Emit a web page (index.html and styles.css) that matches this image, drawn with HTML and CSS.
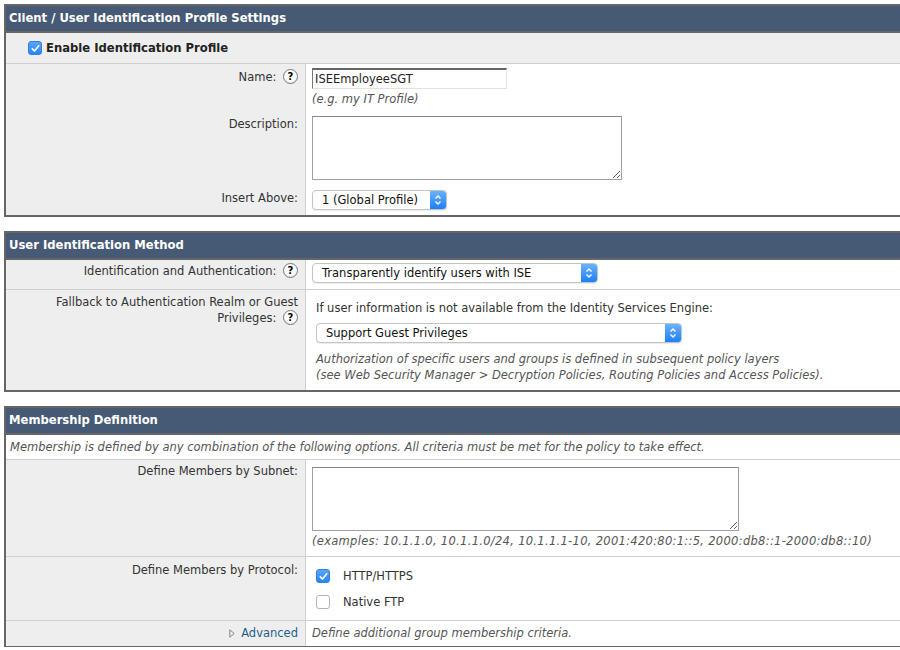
FILE: index.html
```html
<!DOCTYPE html>
<html lang="en">
<head>
    <meta charset="UTF-8">
    <title>Client / User Identification Profile Settings</title>
    <link rel="stylesheet" href="styles.css">
</head>
<body>
<div class="page">
    <div class="section">
        <div class="section-head">Client / User Identification Profile Settings</div>
        <div class="row-full enable">
            <span class="check on"><svg width="13" height="13" viewBox="0 0 13 13"><path d="M3.3 6.8 L5.5 9 L9.8 3.8" fill="none" stroke="#fff" stroke-width="1.7" stroke-linecap="round" stroke-linejoin="round"/></svg></span>
            <span class="enable-text">Enable Identification Profile</span>
        </div>
        <div class="row row-name">
            <div class="label">Name: <span class="help">?</span></div>
            <div class="field">
                <input class="text" type="text" value="ISEEmployeeSGT">
                <div class="hint">(e.g. my IT Profile)</div>
            </div>
        </div>
        <div class="row row-desc">
            <div class="label">Description:</div>
            <div class="field"><textarea class="area"></textarea></div>
        </div>
        <div class="row row-insert last">
            <div class="label">Insert Above:</div>
            <div class="field">
                <span class="select w-insert"><span class="select-text">1 (Global Profile)</span><span class="select-btn"><svg width="16" height="18" viewBox="0 0 16 18"><path d="M5.5 7.5 L8 5 L10.5 7.5 M5.5 10.5 L8 13 L10.5 10.5" fill="none" stroke="#fff" stroke-width="1.4"/></svg></span></span>
            </div>
        </div>
    </div>

    <div class="section">
        <div class="section-head">User Identification Method</div>
        <div class="row row-ident">
            <div class="label">Identification and Authentication: <span class="help">?</span></div>
            <div class="field">
                <span class="select w-ident"><span class="select-text">Transparently identify users with ISE</span><span class="select-btn"><svg width="16" height="18" viewBox="0 0 16 18"><path d="M5.5 7.5 L8 5 L10.5 7.5 M5.5 10.5 L8 13 L10.5 10.5" fill="none" stroke="#fff" stroke-width="1.4"/></svg></span></span>
            </div>
        </div>
        <div class="row row-fallback last">
            <div class="label">Fallback to Authentication Realm or Guest<br>Privileges: <span class="help">?</span></div>
            <div class="field wide">
                <div>If user information is not available from the Identity Services Engine:</div>
                <span class="select w-fallback"><span class="select-text">Support Guest Privileges</span><span class="select-btn"><svg width="16" height="18" viewBox="0 0 16 18"><path d="M5.5 7.5 L8 5 L10.5 7.5 M5.5 10.5 L8 13 L10.5 10.5" fill="none" stroke="#fff" stroke-width="1.4"/></svg></span></span>
                <div class="note">Authorization of specific users and groups is defined in subsequent policy layers<br>(see Web Security Manager &gt; Decryption Policies, Routing Policies and Access Policies).</div>
            </div>
        </div>
    </div>

    <div class="section">
        <div class="section-head">Membership Definition</div>
        <div class="row-full intro">Membership is defined by any combination of the following options. All criteria must be met for the policy to take effect.</div>
        <div class="row row-subnet">
            <div class="label">Define Members by Subnet:</div>
            <div class="field">
                <textarea class="area area-subnet"></textarea>
                <div class="hint examples">(examples: 10.1.1.0, 10.1.1.0/24, 10.1.1.1-10, 2001:420:80:1::5, 2000:db8::1-2000:db8::10)</div>
            </div>
        </div>
        <div class="row row-protocol">
            <div class="label">Define Members by Protocol:</div>
            <div class="field wide">
                <div class="option">
                    <span class="check on"><svg width="13" height="13" viewBox="0 0 13 13"><path d="M3.3 6.8 L5.5 9 L9.8 3.8" fill="none" stroke="#fff" stroke-width="1.7" stroke-linecap="round" stroke-linejoin="round"/></svg></span>
                    <span>HTTP/HTTPS</span>
                </div>
                <div class="option">
                    <span class="check"></span>
                    <span>Native FTP</span>
                </div>
            </div>
        </div>
        <div class="row row-advanced last">
            <div class="label"><svg class="arrow" width="6" height="9" viewBox="0 0 6 9"><path d="M0.8 0.8 L5.2 4.5 L0.8 8.2 Z" fill="none" stroke="#888" stroke-width="1"/></svg><a href="#" class="link">Advanced</a></div>
            <div class="field"><span class="hint">Define additional group membership criteria.</span></div>
        </div>
    </div>
</div>
</body>
</html>
```

FILE: styles.css
```css
body {
    margin: 0;
    padding: 0;
    background: #fff;
    font-family: "DejaVu Sans", Verdana, sans-serif;
    font-size: 11.5px;
    line-height: 16px;
    color: #333;
}
.page {
    width: 900px;
    height: 650px;
    overflow: hidden;
    padding: 4px 0 0 4px;
    box-sizing: border-box;
}
.section {
    width: 910px;
    border: 2px solid #666;
    margin-bottom: 14px;
}
.section-head {
    height: 25px;
    line-height: 25px;
    padding-left: 3px;
    background: #465a75;
    border-bottom: 2px solid #666;
    color: #fff;
    font-weight: bold;
    font-size: 11.6px;
}
.row {
    display: grid;
    grid-template-columns: 300px 1fr;
    border-bottom: 1px solid #cfcfcf;
}
.row.last { border-bottom: none; }
.row-full { border-bottom: 1px solid #cfcfcf; }
.label {
    background: #eee;
    border-right: 1px solid #cfcfcf;
    text-align: right;
    padding: 5px 7px 0 8px;
}
.field {
    padding: 5px 6px;
    background: #fff;
}
.field.wide { padding-left: 10px; }

/* Section 1 */
.enable {
    height: 30px;
    background: #eee;
    display: flex;
    align-items: center;
    padding-left: 22px;
}
.enable-text {
    font-weight: bold;
    color: #222;
    margin-left: 4px;
    font-size: 11.6px;
}
.row-name { height: 46px; }
.row-name .field { padding-top: 4px; }
.row-name .hint { margin-top: 2px; }
.row-desc { height: 73px; }
.row-insert { height: 30px; }
.row-ident { height: 29px; }
.row-ident .label { padding-top: 3px; }
.row-ident .field { padding-top: 3px; }
.row-fallback { height: 100px; }
.row-fallback .label { padding-top: 4px; }
.row-fallback .field { padding-top: 10px; }
.row-fallback .select { margin-top: 7px; }
.note {
    margin-top: 8px;
    font-style: italic;
    color: #555;
}

/* Section 3 */
.intro {
    height: 24px;
    line-height: 24px;
    padding-left: 4px;
    font-style: italic;
    color: #555;
}
.row-subnet { height: 96px; }
.row-subnet .label { padding-top: 3px; }
.row-subnet .field { padding-top: 7px; }
.row-subnet .hint { margin-top: 2px; }
.examples { letter-spacing: 0.3px; }
.row-protocol { height: 63px; }
.row-protocol .field { padding-top: 6px; }
.row-advanced { height: 24px; }
.row-advanced .label { padding-top: 4px; }
.row-advanced .field { padding-top: 4px; }

.option {
    display: flex;
    align-items: center;
    height: 26px;
}
.option .check { margin-right: 13px; }

.hint {
    font-style: italic;
    color: #555;
}
.help {
    display: inline-block;
    width: 13px;
    height: 13px;
    line-height: 13px;
    border: 1px solid #777;
    border-radius: 50%;
    background: radial-gradient(circle at 50% 40%, #fff 55%, #d8d8d8);
    color: #000;
    font-size: 10px;
    font-weight: bold;
    text-align: center;
    vertical-align: 1px;
    margin-left: 3px;
}
.check {
    display: inline-block;
    width: 12px;
    height: 12px;
    border: 1px solid #b5b5b5;
    border-radius: 3px;
    background: #fff;
    box-sizing: content-box;
    flex: none;
}
.check svg { display: block; margin: -0.5px; }
.check.on {
    border-color: #2f7fe6;
    background: linear-gradient(#58a6fb, #2a84f5);
}
.text {
    display: block;
    width: 195px;
    height: 21px;
    box-sizing: border-box;
    margin: 0;
    padding: 0 2px;
    border: 1px solid #e2e2e2;
    border-top: 2px solid #666;
    border-left: 1px solid #777;
    font-family: "DejaVu Sans", Verdana, sans-serif;
    font-size: 11.5px;
    color: #222;
    outline: none;
}
.area {
    display: block;
    width: 310px;
    height: 64px;
    box-sizing: border-box;
    margin: 0;
    border: 1px solid #a0a0a0;
    border-top-color: #888;
    font-family: "DejaVu Sans", Verdana, sans-serif;
    font-size: 11.5px;
}
.area-subnet { width: 427px; height: 64px; }

.select {
    display: inline-flex;
    height: 20px;
    box-sizing: border-box;
    border: 1px solid #c4c4c4;
    border-radius: 4px;
    background: #fff;
    box-shadow: 0 1px 1px rgba(0, 0, 0, 0.08);
    vertical-align: top;
    overflow: hidden;
}
.select-text {
    flex: 1;
    padding-left: 9px;
    line-height: 18px;
    color: #111;
    white-space: nowrap;
}
.select-btn {
    width: 16px;
    height: 18px;
    background: linear-gradient(#6ab2fb, #1f7ff7);
}
.select-btn svg { display: block; }
.w-insert { width: 135px; }
.w-ident { width: 286px; }
.w-fallback { width: 366px; }
.row-fallback .select { display: flex; }

.arrow {
    vertical-align: -1px;
    margin-right: 6px;
}
.link {
    color: #1c5e8c;
    text-decoration: none;
}
```
